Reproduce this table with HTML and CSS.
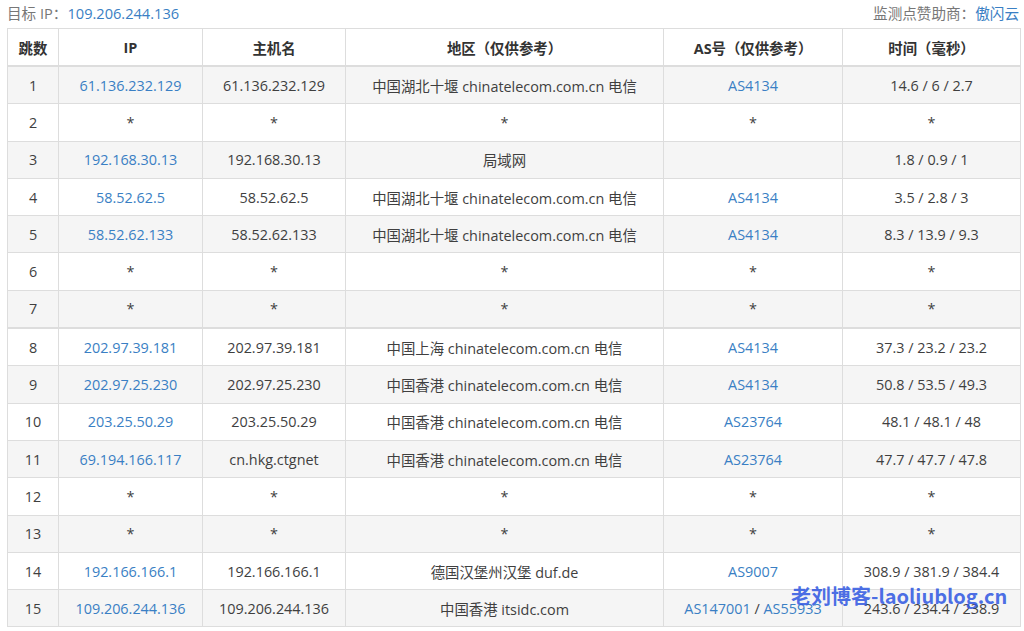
FILE: index.html
```html
<!DOCTYPE html>
<html lang="zh">
<head>
<meta charset="utf-8">
<link rel="stylesheet" href="styles.css">
</head>
<body>
<div class="page">
  <div class="topbar">
    <div class="target">目标 IP：<a class="link" href="#">109.206.244.136</a></div>
    <div class="sponsor">监测点赞助商：<a class="link" href="#">傲闪云</a></div>
  </div>
  <table class="trace">
    <colgroup>
      <col class="c-hop"><col class="c-ip"><col class="c-host"><col class="c-geo"><col class="c-as"><col class="c-time">
    </colgroup>
    <thead>
      <tr><th>跳数</th><th>IP</th><th>主机名</th><th>地区（仅供参考）</th><th>AS号（仅供参考）</th><th>时间（毫秒）</th></tr>
    </thead>
    <tbody>
      <tr class="odd"><td>1</td><td><a class="link" href="#">61.136.232.129</a></td><td>61.136.232.129</td><td>中国湖北十堰 chinatelecom.com.cn 电信</td><td><a class="link" href="#">AS4134</a></td><td>14.6 / 6 / 2.7</td></tr>
      <tr><td>2</td><td>*</td><td>*</td><td>*</td><td>*</td><td>*</td></tr>
      <tr class="odd"><td>3</td><td><a class="link" href="#">192.168.30.13</a></td><td>192.168.30.13</td><td>局域网</td><td></td><td>1.8 / 0.9 / 1</td></tr>
      <tr><td>4</td><td><a class="link" href="#">58.52.62.5</a></td><td>58.52.62.5</td><td>中国湖北十堰 chinatelecom.com.cn 电信</td><td><a class="link" href="#">AS4134</a></td><td>3.5 / 2.8 / 3</td></tr>
      <tr class="odd"><td>5</td><td><a class="link" href="#">58.52.62.133</a></td><td>58.52.62.133</td><td>中国湖北十堰 chinatelecom.com.cn 电信</td><td><a class="link" href="#">AS4134</a></td><td>8.3 / 13.9 / 9.3</td></tr>
      <tr><td>6</td><td>*</td><td>*</td><td>*</td><td>*</td><td>*</td></tr>
      <tr class="odd"><td>7</td><td>*</td><td>*</td><td>*</td><td>*</td><td>*</td></tr>
      <tr class="split"><td>8</td><td><a class="link" href="#">202.97.39.181</a></td><td>202.97.39.181</td><td>中国上海 chinatelecom.com.cn 电信</td><td><a class="link" href="#">AS4134</a></td><td>37.3 / 23.2 / 23.2</td></tr>
      <tr class="odd"><td>9</td><td><a class="link" href="#">202.97.25.230</a></td><td>202.97.25.230</td><td>中国香港 chinatelecom.com.cn 电信</td><td><a class="link" href="#">AS4134</a></td><td>50.8 / 53.5 / 49.3</td></tr>
      <tr><td>10</td><td><a class="link" href="#">203.25.50.29</a></td><td>203.25.50.29</td><td>中国香港 chinatelecom.com.cn 电信</td><td><a class="link" href="#">AS23764</a></td><td>48.1 / 48.1 / 48</td></tr>
      <tr class="odd"><td>11</td><td><a class="link" href="#">69.194.166.117</a></td><td>cn.hkg.ctgnet</td><td>中国香港 chinatelecom.com.cn 电信</td><td><a class="link" href="#">AS23764</a></td><td>47.7 / 47.7 / 47.8</td></tr>
      <tr><td>12</td><td>*</td><td>*</td><td>*</td><td>*</td><td>*</td></tr>
      <tr class="odd"><td>13</td><td>*</td><td>*</td><td>*</td><td>*</td><td>*</td></tr>
      <tr><td>14</td><td><a class="link" href="#">192.166.166.1</a></td><td>192.166.166.1</td><td>德国汉堡州汉堡 duf.de</td><td><a class="link" href="#">AS9007</a></td><td>308.9 / 381.9 / 384.4</td></tr>
      <tr class="odd"><td>15</td><td><a class="link" href="#">109.206.244.136</a></td><td>109.206.244.136</td><td>中国香港 itsidc.com</td><td><a class="link" href="#">AS147001</a> / <a class="link" href="#">AS55933</a></td><td>243.6 / 234.4 / 238.9</td></tr>
    </tbody>
  </table>
  <div class="watermark">老刘博客-laoliublog.cn</div>
</div>
</body>
</html>
```

FILE: styles.css
```css
html, body {
  margin: 0;
  padding: 0;
  background: #ffffff;
}
body {
  font-family: "Open Sans", "Noto Sans CJK SC", sans-serif;
  font-size: 14.4px;
  color: #3f3f3f;
}
.page {
  position: relative;
  width: 1024px;
  height: 631px;
  overflow: hidden;
  padding: 0 4px 0 7px;
  box-sizing: border-box;
}
.topbar {
  display: flex;
  justify-content: space-between;
  align-items: center;
  height: 24px;
  margin-bottom: 4px;
  color: #777777;
  font-size: 14.6px;
}
.topbar .sponsor {
  padding-right: 1px;
}
.link {
  color: #3a7fc4;
  text-decoration: none;
}
.trace {
  width: 1013px;
  border-collapse: collapse;
  table-layout: fixed;
  border: 1px solid #dddddd;
}
.c-hop { width: 51px; }
.c-ip { width: 144px; }
.c-host { width: 143px; }
.c-geo { width: 318px; }
.c-as { width: 179px; }
.c-time { width: 178px; }
.trace th,
.trace td {
  border: 1px solid #dddddd;
  text-align: center;
  padding: 0 4px;
  white-space: nowrap;
}
.trace th {
  height: 36px;
  font-weight: bold;
  color: #333333;
  border-bottom: 2px solid #dddddd;
}
.trace td {
  height: 36.3px;
}
.trace tr.odd td {
  background: #f5f5f5;
}
.trace tr.split td {
  border-top: 2px solid #dddddd;
}
.watermark {
  position: absolute;
  left: 791px;
  top: 583px;
  font-family: "Noto Sans CJK SC", "Open Sans", sans-serif;
  font-weight: bold;
  font-size: 20px;
  line-height: 26px;
  color: rgba(45, 85, 225, 0.85);
  letter-spacing: 0px;
}
```
